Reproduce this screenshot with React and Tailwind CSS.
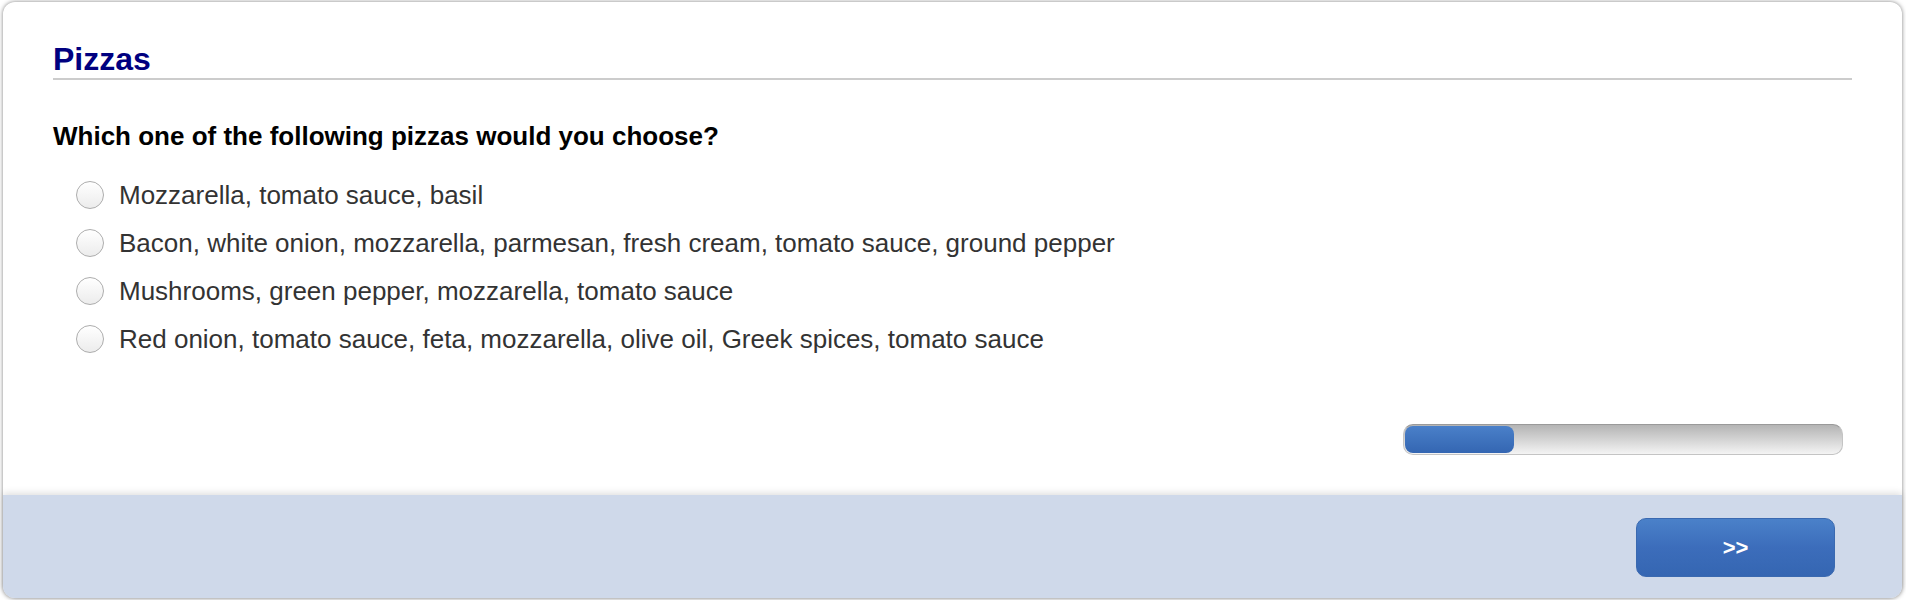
const options = [
  'Mozzarella, tomato sauce, basil',
  'Bacon, white onion, mozzarella, parmesan, fresh cream, tomato sauce, ground pepper',
  'Mushrooms, green pepper, mozzarella, tomato sauce',
  'Red onion, tomato sauce, feta, mozzarella, olive oil, Greek spices, tomato sauce',
];

export default function App() {
  return (
    <div className="min-h-[600px] bg-white pt-[2px] pl-[3px] pr-[4px] font-['Liberation_Sans',Arial,sans-serif]">
      <div className="flex h-[596px] flex-col rounded-[12px] bg-white shadow-[0_0_4px_rgba(0,0,0,0.5)]">
        <div className="flex-1 px-[50px] pt-[39px]">
          {/* Title */}
          <h1 className="border-b-2 border-[#cccccc] text-[32px] font-bold leading-[37px] text-[#000080]">
            Pizzas
          </h1>

          {/* Question */}
          <p className="mt-[41px] text-[26px] font-bold leading-[30px] text-black">
            Which one of the following pizzas would you choose?
          </p>

          <div className="mt-[20px]">
            {options.map((opt, i) => (
              <label key={i} className="flex h-[48px] cursor-pointer items-center pl-[23px]">
                <input
                  type="radio"
                  name="pizza"
                  className="h-[28px] w-[28px] shrink-0 appearance-none rounded-full border border-[#adadad] bg-gradient-to-b from-white to-[#ececec] shadow-[inset_0_1px_1px_rgba(255,255,255,0.9)]"
                />
                <span className="ml-[15px] text-[26px] leading-[48px] text-[#333333]">{opt}</span>
              </label>
            ))}
          </div>

          {/* Progress */}
          <div className="mt-[61px] flex justify-end pr-[9px]">
            <div className="h-[31px] w-[440px] rounded-[10px] border border-[#c4c4c4] border-t-[#9a9a9a] bg-gradient-to-b from-[#b4b4b4] to-[#f4f4f4] p-px">
              <div className="h-full w-1/4 rounded-[8px] bg-gradient-to-b from-[#4a80c9] to-[#3466b2]" />
            </div>
          </div>
        </div>

        {/* Footer */}
        <div className="flex h-[103px] justify-end rounded-b-[12px] bg-[#cfd9ea] pr-[67px] pt-[23px] shadow-[0_-2px_7px_rgba(0,0,0,0.13)]">
          <button className="h-[59px] w-[199px] rounded-[10px] border border-[#3a69b0] bg-gradient-to-b from-[#4a81c9] via-[#3c6dbb] to-[#3566b2] text-[22px] font-bold text-white">
            &gt;&gt;
          </button>
        </div>
      </div>
    </div>
  );
}
